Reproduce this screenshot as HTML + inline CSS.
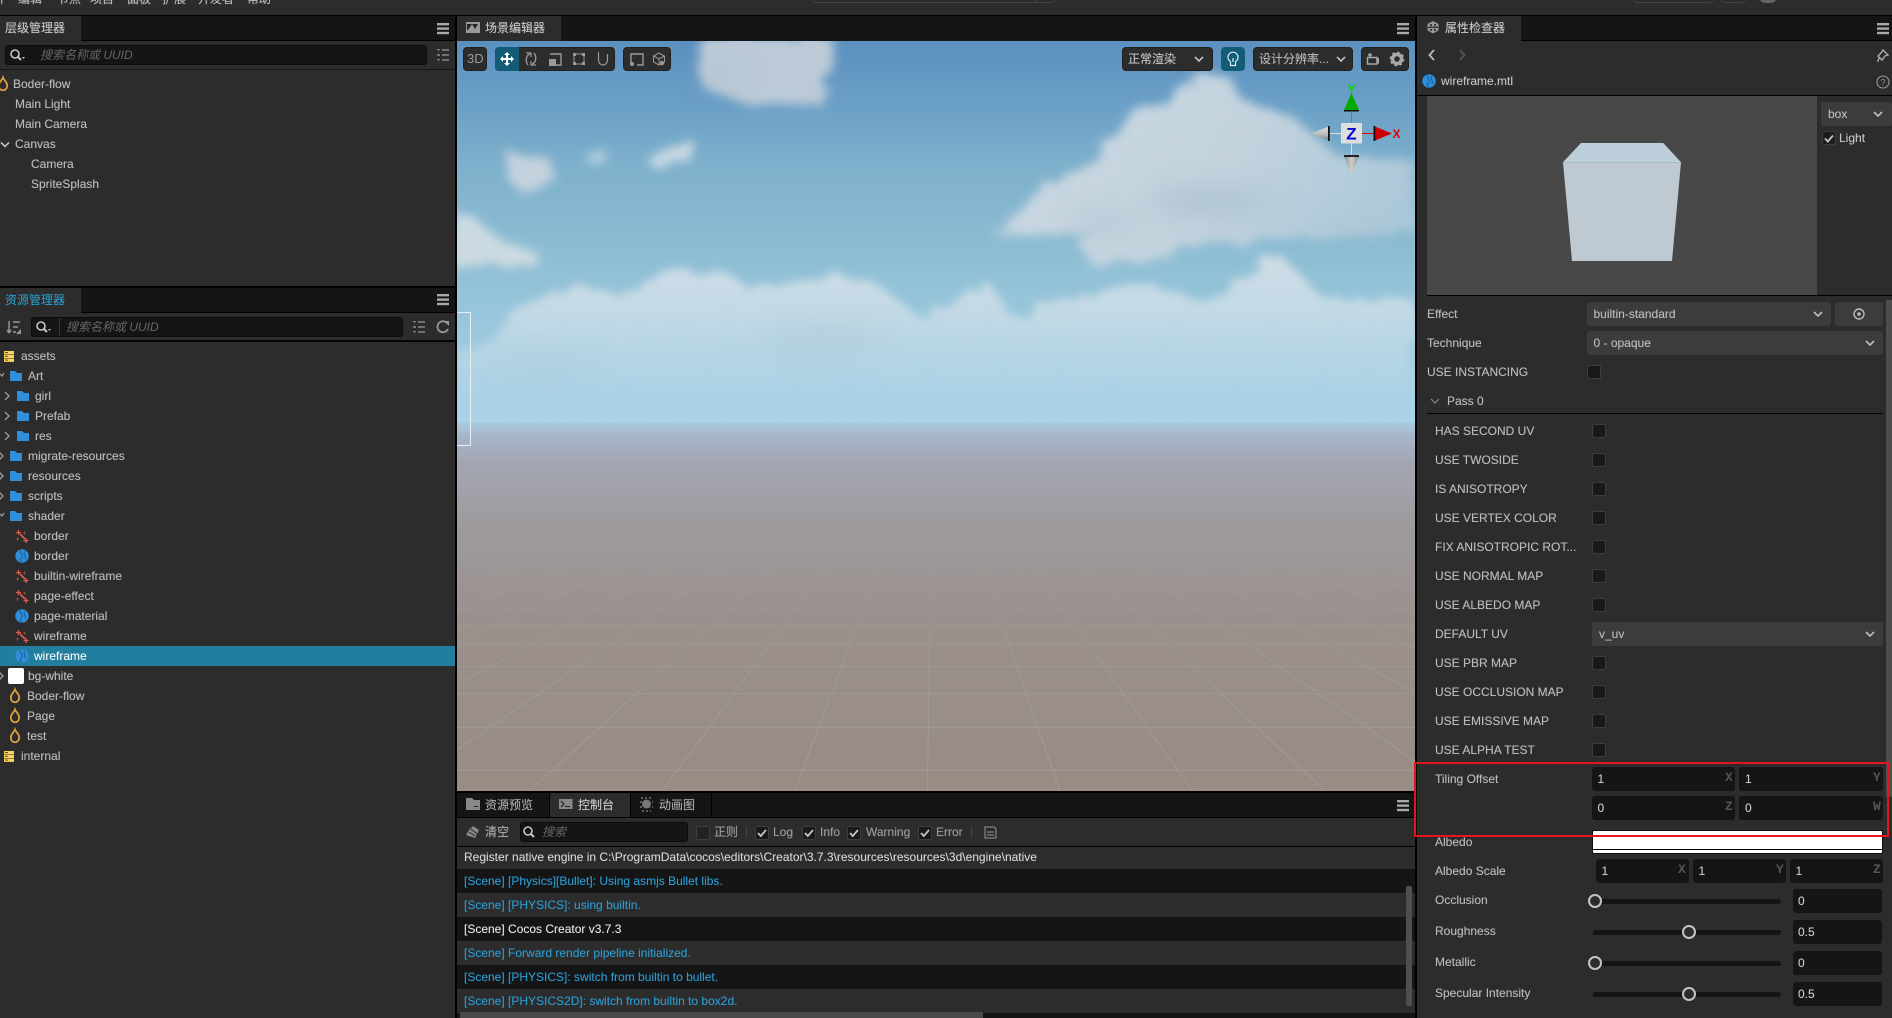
<!DOCTYPE html>
<html lang="zh"><head><meta charset="utf-8"><title>Cocos Creator</title>
<style>
html,body{margin:0;padding:0;background:#000;width:1892px;height:1018px;overflow:hidden}
body{position:relative;font:12px/20px "Liberation Sans","Noto Sans CJK SC",sans-serif;color:#bcbcbc}
div,span{position:absolute;box-sizing:border-box}
span{white-space:nowrap;height:20px;text-shadow:0 0 .6px rgba(190,190,190,.55)}
.p{background:#2c2c2c}.k{background:#151515}
.b{background:#000}
.sel{background:#3c3c3c;border-radius:3px}
.in{background:#151515;border-radius:3px}
.cb{background:#191919;border:1px solid #3d3d3d;border-radius:2px;width:14px;height:14px}
.btn{background:#2c2c2c;border:1px solid #202020;border-radius:4px;height:24px;top:47px}
.ph{font-style:italic;color:#666;text-shadow:none}
.m{font:bold 13px/20px "Liberation Mono",monospace;color:#555;text-shadow:none}
.c{color:#2d9bd0;text-shadow:0 0 .6px rgba(45,155,208,.5)}
</style></head><body>

<!-- scene -->
<div style="left:457px;top:41px;width:958px;height:750px;overflow:hidden">
<svg width="958" height="750" viewBox="0 0 1568 1568" preserveAspectRatio="none" style="display:block">
<defs>
<linearGradient id="sky" x1="0" y1="0" x2="0" y2="1"><stop offset="0" stop-color="#5b90bf"/><stop offset=".16" stop-color="#6a9fc6"/><stop offset=".32" stop-color="#7db0cc"/><stop offset=".6" stop-color="#91c0d5"/><stop offset="1" stop-color="#abd4e9"/></linearGradient>
<linearGradient id="gnd" x1="0" y1="0" x2="0" y2="1"><stop offset="0" stop-color="#a9cbe0"/><stop offset=".035" stop-color="#a7b6cb"/><stop offset=".11" stop-color="#a3a6b2"/><stop offset=".27" stop-color="#9e9b9e"/><stop offset=".53" stop-color="#9a908d"/><stop offset="1" stop-color="#988c84"/></linearGradient>
<linearGradient id="band" gradientUnits="userSpaceOnUse" x1="0" y1="470" x2="0" y2="780"><stop offset="0" stop-color="#d0dee7" stop-opacity=".95"/><stop offset=".35" stop-color="#c6dbe6" stop-opacity=".9"/><stop offset=".75" stop-color="#b8d6e6" stop-opacity=".65"/><stop offset="1" stop-color="#aed4e8" stop-opacity="0"/></linearGradient>
<linearGradient id="big" gradientUnits="userSpaceOnUse" x1="900" y1="100" x2="1568" y2="440"><stop offset="0" stop-color="#cbd9e2"/><stop offset=".55" stop-color="#c2d2dd"/><stop offset="1" stop-color="#b4cddc" stop-opacity=".75"/></linearGradient>
<linearGradient id="fade" gradientUnits="userSpaceOnUse" x1="0" y1="1000" x2="0" y2="1400"><stop offset="0" stop-color="#000"/><stop offset="1" stop-color="#fff"/></linearGradient>
<mask id="gm" maskUnits="userSpaceOnUse" x="0" y="800" width="1568" height="768"><rect x="0" y="800" width="1568" height="768" fill="url(#fade)"/></mask>
<filter id="bl" x="-20%" y="-20%" width="140%" height="140%"><feTurbulence type="fractalNoise" baseFrequency="0.03" numOctaves="3" seed="4" result="n"/><feDisplacementMap in="SourceGraphic" in2="n" scale="30" result="d"/><feGaussianBlur in="d" stdDeviation="8 10"/></filter>
<filter id="bs" x="-5%" y="-20%" width="110%" height="140%"><feTurbulence type="fractalNoise" baseFrequency="0.035 0.03" numOctaves="4" seed="9" result="n"/><feDisplacementMap in="SourceGraphic" in2="n" scale="36" result="d"/><feGaussianBlur in="d" stdDeviation="7 9"/></filter>
<filter id="bb" x="-40%" y="-40%" width="180%" height="180%"><feGaussianBlur stdDeviation="26"/></filter>
</defs>
<rect width="1568" height="800" fill="url(#sky)"/>
<rect y="798" width="1568" height="770" fill="url(#gnd)"/>
<g filter="url(#bl)">
<path d="M400-10H615L600 135 470 130 395 90Z" fill="#bccad7"/>
<path d="M85 235 150 245 160 290 115 325 75 280Z" fill="#c3d2dd"/>
<ellipse cx="230" cy="242" rx="18" ry="16" fill="#c3d6e1" opacity=".7"/>
<path d="M305 245 385 210 385 245 330 270Z" fill="#c8d8e2"/>
<path d="M-10 360 25 365 75 420 130 440 130 470-10 470Z" fill="#cbdae2"/>
<path d="M880 410 960 300 1040 250 1110 140 1160 130 1210 70 1260 70 1280 120 1370 160 1440 240 1568 250 1568 400 1330 420 1180 430 1170 455 1040 470 1020 430 1040 400Z" fill="url(#big)"/>
</g>
<g filter="url(#bs)">
<path d="M40 640 110 550 200 510 260 530 360 480 450 490 480 520 620 490 690 510 760 580 870 500 910 580 1040 525 1140 510 1230 550 1340 440 1420 540 1568 540V780H0V650Z" fill="url(#band)"/>
</g>
<g filter="url(#bb)" fill="#a0b8cb">
<ellipse cx="1230" cy="335" rx="100" ry="26" opacity=".6"/><ellipse cx="1060" cy="375" rx="50" ry="18" opacity=".5"/><ellipse cx="1460" cy="400" rx="90" ry="22" opacity=".3"/>
<ellipse cx="430" cy="65" rx="20" ry="24" opacity=".5"/><ellipse cx="600" cy="620" rx="90" ry="24" opacity=".3"/><ellipse cx="140" cy="680" rx="70" ry="14" opacity=".25"/>
</g>
<g mask="url(#gm)" stroke="#b3aba6" stroke-width="1" fill="none" opacity=".42">
<path vector-effect="non-scaling-stroke" d="M778 800L-1834 1568M778 800L-1617 1568M778 800L-1400 1568M778 800L-1183 1568M778 800L-966 1568M778 800L-749 1568M778 800L-532 1568M778 800L-315 1568M778 800L-98 1568M778 800L119 1568M778 800L336 1568M778 800L553 1568M778 800L770 1568M778 800L987 1568M778 800L1204 1568M778 800L1421 1568M778 800L1638 1568M778 800L1855 1568M778 800L2072 1568M778 800L2289 1568M778 800L2506 1568M778 800L2723 1568M0 1525H1568M0 1435H1568M0 1365H1568M0 1308H1568M0 1262H1568M0 1222H1568M0 1188H1568M0 1158H1568M0 1135H1568M0 1110H1568"/>
</g>
</svg>
</div>
<div style="left:457px;top:312px;width:14px;height:134px;border:1px solid #e8eef2;border-left:0"></div>

<!-- top bar -->
<div class="p" style="left:0;top:0;width:1892px;height:15px"></div>
<span style="left:-6px;top:-11px">件</span><span style="left:18px;top:-11px">编辑</span><span style="left:57px;top:-11px">节点</span><span style="left:90px;top:-11px">项目</span><span style="left:127px;top:-11px">面板</span><span style="left:162px;top:-11px">扩展</span><span style="left:198px;top:-11px">开发者</span><span style="left:247px;top:-11px">帮助</span>
<div style="left:812px;top:-6px;width:243px;height:9px;border:1px solid #444;border-radius:3px"></div>
<div style="left:1035px;top:-6px;width:1px;height:9px;background:#444"></div>
<div style="left:1634px;top:-6px;width:79px;height:9px;border:1px solid #444;border-radius:3px"></div>
<div style="left:1721px;top:-6px;width:24px;height:9px;border:1px solid #444;border-radius:3px"></div>
<div style="left:1759px;top:-10px;width:18px;height:13px;background:#666;border-radius:9px"></div>

<!-- hierarchy -->
<div class="k" style="left:0;top:16px;width:455px;height:25px"></div>
<div class="p" style="left:0;top:16px;width:81px;height:25px"></div>
<div class="p" style="left:0;top:41px;width:455px;height:245px"></div>
<div class="b" style="left:81px;top:40px;width:374px;height:1px"></div>
<div class="in" style="left:5px;top:45px;width:422px;height:20px;border:1px solid #0b0b0b"></div>
<div style="left:0;top:69px;width:455px;height:1px;background:#161616"></div>
<span style="left:5px;top:18px;color:#c9c9c9">层级管理器</span>
<span class="ph" style="left:40px;top:45px">搜索名称或 UUID</span>
<span style="left:13px;top:74px">Boder-flow</span><span style="left:15px;top:94px">Main Light</span><span style="left:15px;top:114px">Main Camera</span><span style="left:15px;top:134px">Canvas</span><span style="left:31px;top:154px">Camera</span><span style="left:31px;top:174px">SpriteSplash</span>

<!-- assets -->
<div class="k" style="left:0;top:288px;width:455px;height:25px"></div>
<div class="p" style="left:0;top:288px;width:81px;height:25px"></div>
<div class="p" style="left:0;top:313px;width:455px;height:705px"></div>
<div class="b" style="left:81px;top:312px;width:374px;height:1px"></div>
<div class="in" style="left:31px;top:317px;width:372px;height:20px;border:1px solid #0b0b0b"></div>
<div style="left:59px;top:318px;width:1px;height:18px;background:#333"></div>
<div class="b" style="left:0;top:340px;width:455px;height:2px;opacity:.85"></div>
<span style="left:5px;top:290px;color:#2ca3d3;text-shadow:none">资源管理器</span>
<span class="ph" style="left:66px;top:317px">搜索名称或 UUID</span>
<div style="left:0;top:646px;width:455px;height:20px;background:#217e9e"></div>
<span style="left:21px;top:346px">assets</span><span style="left:28px;top:366px">Art</span><span style="left:35px;top:386px">girl</span><span style="left:35px;top:406px">Prefab</span><span style="left:35px;top:426px">res</span><span style="left:28px;top:446px">migrate-resources</span><span style="left:28px;top:466px">resources</span><span style="left:28px;top:486px">scripts</span><span style="left:28px;top:506px">shader</span><span style="left:34px;top:526px">border</span><span style="left:34px;top:546px">border</span><span style="left:34px;top:566px">builtin-wireframe</span><span style="left:34px;top:586px">page-effect</span><span style="left:34px;top:606px">page-material</span><span style="left:34px;top:626px">wireframe</span><span style="left:34px;top:646px;color:#fff">wireframe</span><span style="left:28px;top:666px">bg-white</span><span style="left:27px;top:686px">Boder-flow</span><span style="left:27px;top:706px">Page</span><span style="left:27px;top:726px">test</span><span style="left:21px;top:746px">internal</span>
<div style="left:8px;top:668px;width:16px;height:16px;background:#fff;border-radius:2px"></div>

<!-- scene tabs -->
<div class="k" style="left:457px;top:16px;width:958px;height:25px"></div>
<div class="p" style="left:457px;top:16px;width:104px;height:25px"></div>
<span style="left:485px;top:18px;color:#c9c9c9">场景编辑器</span>
<div class="btn" style="left:463px;width:24px"></div>
<div class="btn" style="left:495px;width:120px"></div>
<div style="left:495px;top:47px;width:24px;height:24px;background:#135c78;border-radius:4px 0 0 4px"></div>
<div class="btn" style="left:623px;width:48px"></div>
<span style="left:467px;top:49px;color:#999;font-size:13px;text-shadow:none">3D</span>
<div class="btn" style="left:1122px;width:91px"></div>
<span style="left:1128px;top:49px;color:#c4c4c4">正常渲染</span>
<div class="btn" style="left:1221px;width:24px;background:#135c78;border-color:#135c78"></div>
<div class="btn" style="left:1253px;width:100px"></div>
<span style="left:1259px;top:49px;color:#b9b9b9">设计分辨率...</span>
<div class="btn" style="left:1361px;width:48px"></div>

<!-- console -->
<div class="k" style="left:457px;top:793px;width:958px;height:24px"></div>
<div class="p" style="left:549px;top:793px;width:81px;height:24px"></div>
<div class="b" style="left:549px;top:793px;width:1px;height:24px"></div>
<div class="b" style="left:630px;top:793px;width:1px;height:24px"></div>
<div class="b" style="left:711px;top:793px;width:1px;height:24px"></div>
<div class="b" style="left:457px;top:817px;width:92px;height:1px"></div>
<div class="b" style="left:631px;top:817px;width:784px;height:1px"></div>
<div class="p" style="left:457px;top:818px;width:958px;height:28px"></div>
<div class="b" style="left:457px;top:846px;width:958px;height:1px"></div>
<div class="k" style="left:457px;top:847px;width:958px;height:171px"></div>
<div class="p" style="left:457px;top:847px;width:958px;height:22px"></div>
<div class="p" style="left:457px;top:893px;width:958px;height:24px"></div>
<div class="p" style="left:457px;top:941px;width:958px;height:24px"></div>
<div class="p" style="left:457px;top:989px;width:958px;height:24px"></div>
<div style="left:460px;top:1012px;width:523px;height:6px;background:#4a4a4a"></div>
<div style="left:1406px;top:886px;width:6px;height:120px;background:#4f4f4f;border-radius:2px"></div>
<span style="left:485px;top:795px;color:#aaa">资源预览</span>
<span style="left:578px;top:795px;color:#d0d0d0">控制台</span>
<span style="left:659px;top:795px;color:#aaa">动画图</span>
<span style="left:485px;top:822px;color:#aaa">清空</span>
<div class="in" style="left:520px;top:822px;width:168px;height:20px;border:1px solid #0b0b0b"></div>
<span class="ph" style="left:542px;top:822px">搜索</span>
<div class="cb" style="left:696px;top:826px;background:#222"></div>
<span style="left:714px;top:822px;color:#999">正则</span>
<div class="cb" style="left:755px;top:826px"></div><span style="left:773px;top:822px;color:#999">Log</span>
<div class="cb" style="left:802px;top:826px"></div><span style="left:820px;top:822px;color:#999">Info</span>
<div class="cb" style="left:847px;top:826px"></div><span style="left:866px;top:822px;color:#999">Warning</span>
<div class="cb" style="left:918px;top:826px"></div><span style="left:936px;top:822px;color:#999">Error</span>
<div style="left:746px;top:826px;width:1px;height:12px;background:#444"></div>
<div style="left:971px;top:826px;width:1px;height:12px;background:#444"></div>
<span style="left:464px;top:847px;color:#d6d6d6">Register native engine in C:\ProgramData\cocos\editors\Creator\3.7.3\resources\resources\3d\engine\native</span>
<span class="c" style="left:464px;top:871px">[Scene] [Physics][Bullet]: Using asmjs Bullet libs.</span>
<span class="c" style="left:464px;top:895px">[Scene] [PHYSICS]: using builtin.</span>
<span style="left:464px;top:919px;color:#e8e8e8">[Scene] Cocos Creator v3.7.3</span>
<span class="c" style="left:464px;top:943px">[Scene] Forward render pipeline initialized.</span>
<span class="c" style="left:464px;top:967px">[Scene] [PHYSICS]: switch from builtin to bullet.</span>
<span class="c" style="left:464px;top:991px">[Scene] [PHYSICS2D]: switch from builtin to box2d.</span>

<!-- inspector -->
<div class="p" style="left:1417px;top:16px;width:475px;height:1002px"></div>
<div class="k" style="left:1521px;top:16px;width:371px;height:25px"></div>
<div class="b" style="left:1521px;top:40px;width:371px;height:1px"></div>
<span style="left:1445px;top:18px;color:#c9c9c9">属性检查器</span>
<span style="left:1441px;top:71px;color:#c6c6c6">wireframe.mtl</span>
<div class="b" style="left:1417px;top:95px;width:475px;height:1px"></div>
<div style="left:1427px;top:96px;width:390px;height:200px;background:#484848"></div>
<div class="b" style="left:1427px;top:295px;width:465px;height:1px"></div>
<div style="left:1886px;top:300px;width:6px;height:497px;background:#4d4d4d"></div>
<div class="sel" style="left:1821px;top:102px;width:71px;height:24px"></div>
<span style="left:1828px;top:104px">box</span>
<div class="cb" style="left:1822px;top:131px;background:#1d1d1d"></div>
<span style="left:1839px;top:128px;color:#c6c6c6">Light</span>
<div class="sel" style="left:1587px;top:302px;width:244px;height:24px"></div>
<div class="sel" style="left:1835px;top:302px;width:48px;height:24px"></div>
<div class="sel" style="left:1587px;top:331px;width:296px;height:24px"></div>
<div class="b" style="left:1427px;top:413px;width:456px;height:1px"></div>
<div class="sel" style="left:1592px;top:622px;width:291px;height:24px"></div>

<span style="left:1427px;top:304px">Effect</span><span style="left:1593.5px;top:304px">builtin-standard</span>
<span style="left:1427px;top:333px">Technique</span><span style="left:1593.5px;top:333px">0 - opaque</span>
<span style="left:1427px;top:362px">USE INSTANCING</span><div class="cb" style="left:1587px;top:365px"></div>
<span style="left:1447px;top:391px">Pass 0</span>
<span style="left:1435px;top:421px">HAS SECOND UV</span><div class="cb" style="left:1592px;top:424px"></div>
<span style="left:1435px;top:450px">USE TWOSIDE</span><div class="cb" style="left:1592px;top:453px"></div>
<span style="left:1435px;top:479px">IS ANISOTROPY</span><div class="cb" style="left:1592px;top:482px"></div>
<span style="left:1435px;top:508px">USE VERTEX COLOR</span><div class="cb" style="left:1592px;top:511px"></div>
<span style="left:1435px;top:537px">FIX ANISOTROPIC ROT...</span><div class="cb" style="left:1592px;top:540px"></div>
<span style="left:1435px;top:566px">USE NORMAL MAP</span><div class="cb" style="left:1592px;top:569px"></div>
<span style="left:1435px;top:595px">USE ALBEDO MAP</span><div class="cb" style="left:1592px;top:598px"></div>
<span style="left:1435px;top:624px">DEFAULT UV</span><span style="left:1599px;top:624px">v_uv</span>
<span style="left:1435px;top:653px">USE PBR MAP</span><div class="cb" style="left:1592px;top:656px"></div>
<span style="left:1435px;top:682px">USE OCCLUSION MAP</span><div class="cb" style="left:1592px;top:685px"></div>
<span style="left:1435px;top:711px">USE EMISSIVE MAP</span><div class="cb" style="left:1592px;top:714px"></div>
<span style="left:1435px;top:740px">USE ALPHA TEST</span><div class="cb" style="left:1592px;top:743px"></div>

<span style="left:1435px;top:769px">Tiling Offset</span>
<div class="in" style="left:1592px;top:767px;width:143px;height:24px"></div><div class="in" style="left:1739px;top:767px;width:144px;height:24px"></div>
<div class="in" style="left:1592px;top:796px;width:143px;height:24px"></div><div class="in" style="left:1739px;top:796px;width:144px;height:24px"></div>
<span style="left:1597.5px;top:769px;color:#ccc">1</span><span style="left:1745px;top:769px;color:#ccc">1</span>
<span style="left:1597.5px;top:798px;color:#ccc">0</span><span style="left:1745px;top:798px;color:#ccc">0</span>
<span class="m" style="left:1725px;top:768px">X</span><span class="m" style="left:1873px;top:768px">Y</span><span class="m" style="left:1725px;top:797px">Z</span><span class="m" style="left:1873px;top:797px">W</span>

<span style="left:1435px;top:832px">Albedo</span>
<div style="left:1592px;top:830px;width:291px;height:24px;background:#fff;border:1px solid #111;border-radius:2px"></div>
<div class="b" style="left:1592px;top:849px;width:291px;height:1px"></div>
<span style="left:1435px;top:861px">Albedo Scale</span>
<div class="in" style="left:1596px;top:859px;width:93px;height:24px"></div><div class="in" style="left:1693px;top:859px;width:93px;height:24px"></div><div class="in" style="left:1790px;top:859px;width:93px;height:24px"></div>
<span style="left:1601.5px;top:861px;color:#ccc">1</span><span style="left:1698.5px;top:861px;color:#ccc">1</span><span style="left:1795.5px;top:861px;color:#ccc">1</span>
<span class="m" style="left:1678px;top:860px">X</span><span class="m" style="left:1776px;top:860px">Y</span><span class="m" style="left:1873px;top:860px">Z</span>

<span style="left:1435px;top:890px">Occlusion</span><span style="left:1435px;top:921px">Roughness</span><span style="left:1435px;top:952px">Metallic</span><span style="left:1435px;top:983px">Specular Intensity</span>
<div class="in" style="left:1793px;top:889px;width:89px;height:24px"></div><div class="in" style="left:1793px;top:920px;width:89px;height:24px"></div><div class="in" style="left:1793px;top:951px;width:89px;height:24px"></div><div class="in" style="left:1793px;top:982px;width:89px;height:24px"></div>
<span style="left:1798px;top:891px;color:#ccc">0</span><span style="left:1798px;top:922px;color:#ccc">0.5</span><span style="left:1798px;top:953px;color:#ccc">0</span><span style="left:1798px;top:984px;color:#ccc">0.5</span>
<div class="k" style="left:1593px;top:899px;width:188px;height:5px;border-radius:3px"></div><div class="k" style="left:1593px;top:930px;width:188px;height:5px;border-radius:3px"></div><div class="k" style="left:1593px;top:961px;width:188px;height:5px;border-radius:3px"></div><div class="k" style="left:1593px;top:992px;width:188px;height:5px;border-radius:3px"></div>

<!-- icons overlay -->
<svg width="1892" height="1018" viewBox="0 0 1892 1018" style="position:absolute;left:0;top:0;pointer-events:none">
<defs>
<g id="menu"><rect x="0" y="0" width="12" height="2.4" fill="#aaa"/><rect y="4.4" width="12" height="2.4" fill="#aaa"/><rect y="8.8" width="12" height="2.4" fill="#aaa"/></g>
<path id="fl" d="M0-6.5C-.8-4-4.200-2-4.200 1.700A4.200 4.600 0 0 0 4.200 1.700C4.200-2 .8-4 0-6.500Z" fill="none" stroke="#e6a23c" stroke-width="1.700"/>
<path id="fo" d="M-6-5H-1L1-3H6V5H-6Z" fill="#2f8fdb"/>
<g id="db" fill="#fad564"><rect x="-5" y="-5.500" width="10" height="3.300"/><rect x="-5" y="-1.700" width="10" height="3.300"/><rect x="-5" y="2.100" width="10" height="3.300"/><rect x="-4" y="-4.500" width="3" height="1" fill="#5a4a20"/><rect x="-4" y="-.7" width="3" height="1" fill="#5a4a20"/><rect x="-4" y="3.100" width="3" height="1" fill="#5a4a20"/></g>
<g id="mt"><circle r="6.700" fill="#2f8fdb"/><path d="M-1-6C-4-3 2-2 0 1S-3 4 0 6M3-5C0-2 5 0 3 3" fill="none" stroke="#175a90" stroke-width=".9"/></g>
<g id="fx" fill="none" stroke="#d9604f"><path d="M-2-2 3 3" stroke-width="1.700"/><path d="M-3.500-6V-1M-6-3.500H-1" stroke-width="1.300"/><path d="M4 2V7M1.500 4.500H6.500" stroke-width="1.300"/><path d="M2.500-4.500V-1.500M1-3H4M-4.500 1.500V4.500M-6 3H-3" stroke-width=".8" opacity=".75"/></g>
<path id="ch" d="M-4-2 0 2 4-2" fill="none" stroke="#c0c0c0" stroke-width="1.600"/>
<path id="cr" d="M-2-4 2 0-2 4" fill="none" stroke="#999" stroke-width="1.400"/>
<path id="ck" d="M-4 0-1.200 3 4-3" fill="none" stroke="#c4c4c4" stroke-width="1.800"/>
<g id="srch" fill="none" stroke="#c4c4c4"><circle cx="-1" cy="-1" r="4" stroke-width="1.600"/><path d="M2 2 5 5" stroke-width="2"/></g>
<g id="lst" stroke="#999" stroke-width="1.300" fill="none"><path d="M-1-5H6M-1 0H6M-1 5H6"/><path d="M-6-6-3-6-4.500-4Z M-6 4-3 4-4.500 6Z" fill="#999" stroke="none"/><path d="M-6 0H-3"/></g>
<linearGradient id="cg" x1="0" y1="0" x2="0" y2="1"><stop offset="0" stop-color="#e0e0e0"/><stop offset=".55" stop-color="#bdbdbd"/><stop offset="1" stop-color="#7f7f7f"/></linearGradient>
<linearGradient id="ch2" x1="0" y1="0" x2="1" y2="0"><stop offset="0" stop-color="#8a8a8a"/><stop offset=".5" stop-color="#cfcfcf"/><stop offset="1" stop-color="#8a8a8a"/></linearGradient>
</defs>
<!-- menus -->
<use href="#menu" x="437" y="23"/><use href="#menu" x="437" y="294"/><use href="#menu" x="1397" y="23"/><use href="#menu" x="1397" y="800"/><use href="#menu" x="1877" y="23"/>
<!-- hierarchy -->
<use href="#srch" x="16" y="55"/><path d="M22 57H25L23.500 59Z" fill="#bbb"/>
<use href="#lst" x="443" y="55"/>
<use href="#fl" x="3" y="84"/>
<use href="#ch" x="5" y="144.500"/>
<!-- assets toolbar -->
<g stroke="#999" stroke-width="1.400" fill="none"><path d="M9 321V333M9 333 7 330M9 333 11 330M13 322H20M13 327H18M13 332H16"/></g><path d="M16 334 21 334 21 329Z" fill="#999"/>
<use href="#srch" x="42" y="327"/><path d="M48 329H51L49.500 331Z" fill="#bbb"/>
<use href="#lst" x="419" y="327"/>
<path d="M447 323A5.500 5.500 0 1 0 448 329" fill="none" stroke="#999" stroke-width="1.800"/><path d="M444 321 449 321 449 326Z" fill="#999"/>
<!-- assets tree -->
<use href="#db" x="9" y="356.500"/><use href="#db" x="9" y="756.500"/>
<use href="#fo" x="16" y="376"/><use href="#fo" x="23" y="396"/><use href="#fo" x="23" y="416"/><use href="#fo" x="23" y="436"/><use href="#fo" x="16" y="456"/><use href="#fo" x="16" y="476"/><use href="#fo" x="16" y="496"/><use href="#fo" x="16" y="516"/>
<path d="M0 374 2 376 4 373" fill="none" stroke="#999" stroke-width="1.300"/><path d="M0 514 2 516 4 513" fill="none" stroke="#999" stroke-width="1.300"/>
<use href="#cr" x="7" y="396"/><use href="#cr" x="7" y="416"/><use href="#cr" x="7" y="436"/>
<use href="#cr" x="1" y="456"/><use href="#cr" x="1" y="476"/><use href="#cr" x="1" y="496"/><use href="#cr" x="1" y="676"/>
<use href="#fx" x="22" y="536"/><use href="#fx" x="22" y="576"/><use href="#fx" x="22" y="596"/><use href="#fx" x="22" y="636"/>
<use href="#mt" x="22" y="556"/><use href="#mt" x="22" y="616"/><use href="#mt" x="22" y="656"/>
<use href="#fl" x="15" y="696"/><use href="#fl" x="15" y="716"/><use href="#fl" x="15" y="736"/>
<!-- scene tab icon -->
<path d="M466 22H480V33H466Z" fill="#999"/><path d="M468 30 472 24 475 29 478 24H467V30Z" fill="#222"/>
<!-- scene toolbar -->
<g fill="#fff"><path d="M507 52 510 55H508V58H511V56L514 59 511 62V60H508V63H510L507 66 504 63H506V60H503V62L500 59 503 56V58H506V55H504Z"/></g>
<g fill="none" stroke="#999" stroke-width="1.400">
<path d="M530 54C526 55 525 61 528 65M532 64C536 63 537 57 534 53"/><path d="M526 53H531V57M536 65H531V61" stroke-width="1.200"/>
<path d="M550 54H561V65H556"/>
<rect x="574" y="54" width="10" height="10" stroke-width="1"/>
<path d="M598.500 54V60A4.500 5 0 0 0 607.500 60V54" stroke-width="1.200"/>
<path d="M631 64V54H643V65H637" stroke-width="1.400"/>
<path d="M659 53 664.500 56V62L659 65 653.500 62V56ZM653.500 56 659 59 664.500 56M659 59V64" stroke-width="1"/>
</g>
<g fill="#999"><rect x="549" y="59" width="7" height="7"/><rect x="573" y="53" width="3" height="3"/><rect x="582" y="53" width="3" height="3"/><rect x="573" y="62" width="3" height="3"/><rect x="582" y="62" width="3" height="3"/><rect x="598" y="52" width="1" height="2"/><circle cx="632" cy="64" r="2"/><circle cx="662" cy="63" r="2.200"/></g>
<use href="#ch" x="1199" y="59"/>
<use href="#ch" x="1341" y="59"/>
<!-- bulb -->
<path d="M1230.500 61.500A5 5 0 1 1 1235.500 61.500" fill="none" stroke="#ddeef4" stroke-width="1.200"/><path d="M1233 58V62M1230.500 61.500V65.500H1235.500V61.500" fill="none" stroke="#ddeef4" stroke-width="1.200"/>
<!-- camera, gear -->
<path d="M1367.500 57.500H1377V64H1367.500Z" fill="none" stroke="#a8a8a8" stroke-width="1.500"/><path d="M1377 59 1379 57.500V64L1377 62.500Z" fill="#a8a8a8"/><circle cx="1370" cy="55" r="1.700" fill="#a8a8a8"/>
<circle cx="1397" cy="59" r="4.500" fill="none" stroke="#a8a8a8" stroke-width="3.500"/><circle cx="1397" cy="59" r="6.500" fill="none" stroke="#a8a8a8" stroke-width="1.800" stroke-dasharray="2.500 2.600"/>
<!-- gizmo -->
<path d="M1351.500 112V124" stroke="#0c0" stroke-width="1"/><path d="M1362 133.500H1375" stroke="#e00" stroke-width="1"/><path d="M1329 133.500H1342M1351.500 143V156" stroke="#ddd" stroke-width="1"/>
<path d="M1351.500 93 1359 110H1344Z" fill="#0a0"/><rect x="1344" y="110" width="15" height="1.500" fill="#111"/>
<path d="M1392 133.500 1375 126.500V140.500Z" fill="#c00"/><rect x="1373.500" y="126" width="1.800" height="15" fill="#111"/>
<path d="M1311 133.500 1329 126.500V140.500Z" fill="url(#cg)"/><rect x="1328" y="126" width="1.800" height="15" fill="#111"/>
<path d="M1351.500 174 1344 156H1359Z" fill="url(#ch2)"/><rect x="1344" y="155" width="15" height="2" fill="#222"/>
<rect x="1341" y="123" width="21" height="20.500" fill="#dedede"/>
<text x="1351.500" y="139.500" text-anchor="middle" font-family="Liberation Sans" font-weight="bold" font-size="17" fill="#00d">Z</text>
<text x="1351.500" y="93" text-anchor="middle" font-family="Liberation Sans" font-weight="bold" font-size="12" fill="#0d0">Y</text>
<text x="1392.500" y="138" font-family="Liberation Sans" font-weight="bold" font-size="12" fill="#e00">X</text>
<!-- console -->
<path d="M466 798H472L474 800H480V810H466Z" fill="#888"/><rect x="474" y="806" width="4" height="1" fill="#222"/>
<rect x="559" y="799" width="13.500" height="10" fill="#888"/><path d="M561 801 564 804 561 807" fill="none" stroke="#222" stroke-width="1.200"/><rect x="565" y="806" width="5" height="1" fill="#222"/>
<g fill="#777"><circle cx="646.500" cy="804" r="4.500"/></g><path d="M641 798H652M640 802H653M640 807H653M642 811H651" stroke="#777" stroke-width="1.400" stroke-dasharray="2 2"/>
<path d="M473 826 479 830 475 838 466 835 469 830Z" fill="#888"/><path d="M469 832 475 836M471 829 477 834" stroke="#2c2c2c" stroke-width="1"/>
<use href="#srch" x="529" y="832"/>
<use href="#ck" x="762" y="833"/><use href="#ck" x="809" y="833"/><use href="#ck" x="854" y="833"/><use href="#ck" x="925" y="833"/>
<path d="M985 827H994L996 829V838H985ZM987 832H994M987 835H994" fill="none" stroke="#999" stroke-width="1"/>
<!-- inspector -->
<path d="M1433 21 1438.500 24V30.500L1433 33.500 1427.500 30.500V24Z" fill="#999"/><path d="M1428 27.300H1438" stroke="#222" stroke-width="1.200"/><circle cx="1431" cy="25" r="1" fill="#222"/><circle cx="1435" cy="25" r="1" fill="#222"/><circle cx="1431" cy="30" r="1" fill="#222"/><circle cx="1435" cy="30" r="1" fill="#222"/>
<path d="M1434 50 1429.500 55 1434 60" fill="none" stroke="#bbb" stroke-width="1.800"/><path d="M1460 50 1464.500 55 1460 60" fill="none" stroke="#555" stroke-width="1.800"/>
<path d="M1883 51 1888 56 1885 57 1882 61 1878 57 1881 54ZM1879 59 1878 62 1877 62" transform="translate(0 -1)" fill="none" stroke="#aaa" stroke-width="1.400"/>
<use href="#mt" x="1429" y="81"/>
<circle cx="1883" cy="82" r="6" fill="none" stroke="#999" stroke-width="1.100"/><text x="1883" y="85.500" text-anchor="middle" font-family="Liberation Sans" font-size="9" fill="#999">?</text>
<!-- cube -->
<path d="M1581 143H1663.300L1681 162.300H1563Z" fill="#bccfda"/>
<path d="M1563 162.300H1681L1672 261H1572Z" fill="#bfc9d2"/>
<use href="#ch" x="1878" y="114"/>
<use href="#ck" x="1829" y="138.500"/>
<use href="#ch" x="1818" y="314"/><use href="#ch" x="1870" y="343"/><use href="#ch" x="1870" y="634"/>
<circle cx="1859" cy="314" r="5" fill="none" stroke="#bbb" stroke-width="1.400"/><circle cx="1859" cy="314" r="1.800" fill="#bbb"/>
<path d="M1431 399 1435 403 1439 399" fill="none" stroke="#888" stroke-width="1.200"/>
<!-- slider knobs -->
<g fill="#2c2c2c" stroke="#c4c4c4" stroke-width="2"><circle cx="1595" cy="901" r="6"/><circle cx="1689" cy="932" r="6"/><circle cx="1595" cy="963" r="6"/><circle cx="1689" cy="994" r="6"/></g>
<!-- red annotation -->
<rect x="1415" y="763" width="473" height="73" fill="none" stroke="#e3151f" stroke-width="2"/>
</svg>
</body></html>
